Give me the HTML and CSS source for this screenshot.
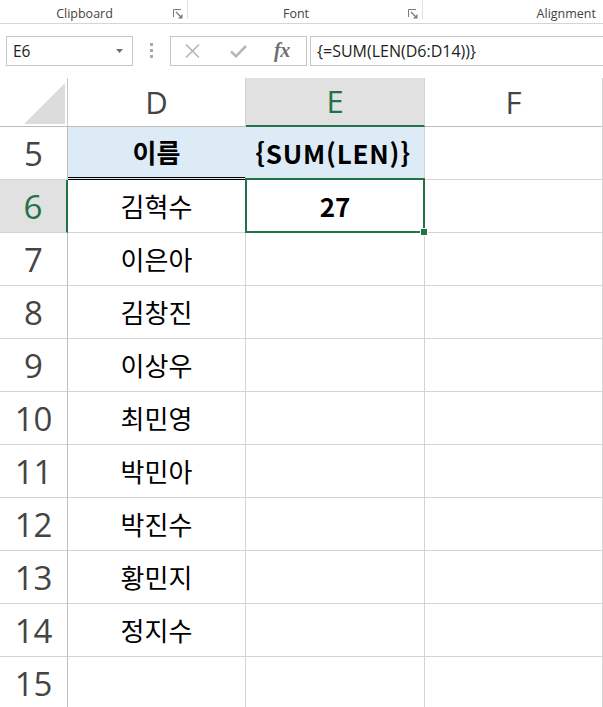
FILE: index.html
```html
<!DOCTYPE html>
<html lang="ko">
<head>
<meta charset="utf-8">
<title>Excel</title>
<link rel="stylesheet" href="styles.css">
</head>
<body>
<div class="ribbon">
  <div class="group g1"><span class="glabel">Clipboard</span>
    <svg class="launcher" width="10" height="10" viewBox="0 0 10 10"><path d="M0.5 8V0.5H8" fill="none" stroke="#7a7a7a" stroke-width="1"/><path d="M3 3L7.5 7.5" stroke="#7a7a7a" stroke-width="1.2"/><path d="M9.5 5V9.5H5Z" fill="#7a7a7a"/></svg>
  </div>
  <div class="group g2"><span class="glabel">Font</span>
    <svg class="launcher" width="10" height="10" viewBox="0 0 10 10"><path d="M0.5 8V0.5H8" fill="none" stroke="#7a7a7a" stroke-width="1"/><path d="M3 3L7.5 7.5" stroke="#7a7a7a" stroke-width="1.2"/><path d="M9.5 5V9.5H5Z" fill="#7a7a7a"/></svg>
  </div>
  <div class="group g3"><span class="glabel">Alignment</span></div>
</div>

<div class="fbar">
  <div class="namebox"><span>E6</span>
    <svg width="7" height="4" viewBox="0 0 7 4"><path d="M0 0H7L3.5 4Z" fill="#6f6f6f"/></svg>
  </div>
  <div class="grip"><i></i><i></i><i></i></div>
  <div class="fxbox">
    <svg class="ic-x" width="15" height="14" viewBox="0 0 15 14"><path d="M1 0.5L14 13.5M14 0.5L1 13.5" stroke="#b7b7b7" stroke-width="1.6" fill="none"/></svg>
    <svg class="ic-check" width="17" height="13" viewBox="0 0 17 13"><path d="M1 6.5L6 11.2L16 1" stroke="#b7b7b7" stroke-width="2.6" fill="none"/></svg>
    <span class="fx">fx</span>
  </div>
  <div class="formula">{=SUM(LEN(D6:D14))}</div>
</div>

<div class="sheet">
  <div class="corner"><div class="tri"></div></div>
  <div class="colhdr">D</div>
  <div class="colhdr active">E</div>
  <div class="colhdr">F</div>

  <div class="rowhdr">5</div>
  <div class="cell title dcol">이름</div>
  <div class="cell title wide">{SUM(LEN)}</div>
  <div class="cell"></div>

  <div class="rowhdr active">6</div>
  <div class="cell">김혁수</div>
  <div class="cell bold">27</div>
  <div class="cell"></div>

  <div class="rowhdr">7</div>
  <div class="cell">이은아</div>
  <div class="cell"></div>
  <div class="cell"></div>

  <div class="rowhdr">8</div>
  <div class="cell">김창진</div>
  <div class="cell"></div>
  <div class="cell"></div>

  <div class="rowhdr">9</div>
  <div class="cell">이상우</div>
  <div class="cell"></div>
  <div class="cell"></div>

  <div class="rowhdr">10</div>
  <div class="cell">최민영</div>
  <div class="cell"></div>
  <div class="cell"></div>

  <div class="rowhdr">11</div>
  <div class="cell">박민아</div>
  <div class="cell"></div>
  <div class="cell"></div>

  <div class="rowhdr">12</div>
  <div class="cell">박진수</div>
  <div class="cell"></div>
  <div class="cell"></div>

  <div class="rowhdr">13</div>
  <div class="cell">황민지</div>
  <div class="cell"></div>
  <div class="cell"></div>

  <div class="rowhdr">14</div>
  <div class="cell">정지수</div>
  <div class="cell"></div>
  <div class="cell"></div>

  <div class="rowhdr">15</div>
  <div class="cell"></div>
  <div class="cell"></div>
  <div class="cell"></div>

  <div class="sel"><div class="handle"></div></div>
</div>
</body>
</html>
```

FILE: styles.css
```css
* { box-sizing: border-box; }

html, body {
  margin: 0;
  padding: 0;
  background: #ffffff;
  overflow: hidden;
  width: 603px;
  height: 707px;
}

body {
  font-family: "Open Sans", "Noto Sans", sans-serif;
  color: #444444;
}

/* ribbon */
.ribbon {
  height: 24px;
  display: flex;
  align-items: flex-start;
  border-bottom: 1px solid #d5d5d5;
}

.group {
  height: 19px;
  display: flex;
  align-items: flex-start;
  border-right: 1px solid #e1e1e1;
}

.g1 { width: 188px; }
.g2 { width: 235px; }
.g3 { flex: 1; border-right: none; }

.glabel {
  flex: 1;
  text-align: center;
  font-size: 12.5px;
  line-height: 16px;
  padding-top: 6px;
  padding-right: 4px;
  color: #444444;
  white-space: nowrap;
}

.g3 .glabel {
  text-align: right;
  padding-right: 7px;
}

.launcher {
  margin-top: 9px;
  margin-right: 4px;
  flex: none;
}

/* formula bar */
.fbar {
  height: 54px;
  display: flex;
  align-items: flex-start;
  padding-top: 12px;
}

.namebox {
  margin-left: 6px;
  width: 127px;
  height: 30px;
  border: 1px solid #c6c6c6;
  display: flex;
  align-items: center;
  justify-content: space-between;
  padding: 0 9px 0 6px;
  font-size: 15.5px;
  color: #222222;
}

.grip {
  margin-left: 17px;
  width: 3px;
  padding-top: 7px;
  display: flex;
  flex-direction: column;
  gap: 3px;
}

.grip i {
  display: block;
  width: 3px;
  height: 3px;
  background: #a9a9a9;
}

.fxbox {
  margin-left: 17px;
  width: 137px;
  height: 30px;
  border: 1px solid #c6c6c6;
  display: flex;
  align-items: center;
}

.ic-x { margin-left: 14px; }
.ic-check { margin-left: 30px; }

.fx {
  margin-left: 27px;
  font-family: "Liberation Serif", "DejaVu Serif", serif;
  font-style: italic;
  font-weight: 700;
  font-size: 20px;
  color: #707070;
  letter-spacing: -0.5px;
  margin-top: -2px;
}

.formula {
  margin-left: 3px;
  margin-right: -3px;
  flex: 1;
  height: 30px;
  border: 1px solid #c6c6c6;
  display: flex;
  align-items: center;
  padding-left: 6px;
  font-size: 16px;
  color: #222222;
}

/* sheet */
.sheet {
  position: relative;
  display: grid;
  grid-template-columns: 68px 178px 179px 178px;
  grid-template-rows: 49px;
  grid-auto-rows: 53px;
}

.corner {
  border-right: 1px solid #c8c8c8;
  border-bottom: 1px solid #bdbdbd;
  display: flex;
  align-items: flex-end;
  justify-content: flex-end;
  padding: 0 2px 2px 0;
}

.tri {
  width: 41px;
  height: 41px;
  background: #dcdcdc;
  clip-path: polygon(100% 0, 100% 100%, 0 100%);
}

.colhdr {
  border-right: 1px solid #d4d4d4;
  border-bottom: 1px solid #bdbdbd;
  display: flex;
  align-items: center;
  justify-content: center;
  font-size: 31px;
  line-height: 1;
  color: #444444;
}

.colhdr.active {
  background: #e1e1e1;
  color: #217346;
  border-bottom: 2px solid #217346;
}

.rowhdr {
  border-right: 1px solid #bdbdbd;
  border-bottom: 1px solid #d4d4d4;
  display: flex;
  align-items: center;
  justify-content: center;
  font-size: 33px;
  line-height: 1;
  color: #444444;
}

.rowhdr.active {
  background: #e1e1e1;
  color: #217346;
  border-right: 2px solid #217346;
}

.cell {
  border-right: 1px solid #d4d4d4;
  border-bottom: 1px solid #d4d4d4;
  display: flex;
  align-items: center;
  justify-content: center;
  font-family: "Noto Sans CJK KR", "Noto Sans", sans-serif;
  font-size: 26px;
  line-height: 1;
  color: #000000;
  white-space: nowrap;
}

.cell.title {
  background: #ddebf7;
  font-weight: 700;
}

.cell.wide {
  letter-spacing: 0.8px;
  padding-right: 4px;
}

.cell.dcol {
  border-right-color: #ddebf7;
  border-bottom: 3px double #000000;
}

.cell.bold { font-weight: 700; }

.sel {
  position: absolute;
  left: 245px;
  top: 100px;
  width: 180px;
  height: 55px;
  border: 2px solid #217346;
}

.handle {
  position: absolute;
  left: 173px;
  top: 48px;
  width: 8px;
  height: 8px;
  background: #217346;
  border: 1px solid #ffffff;
}
```
